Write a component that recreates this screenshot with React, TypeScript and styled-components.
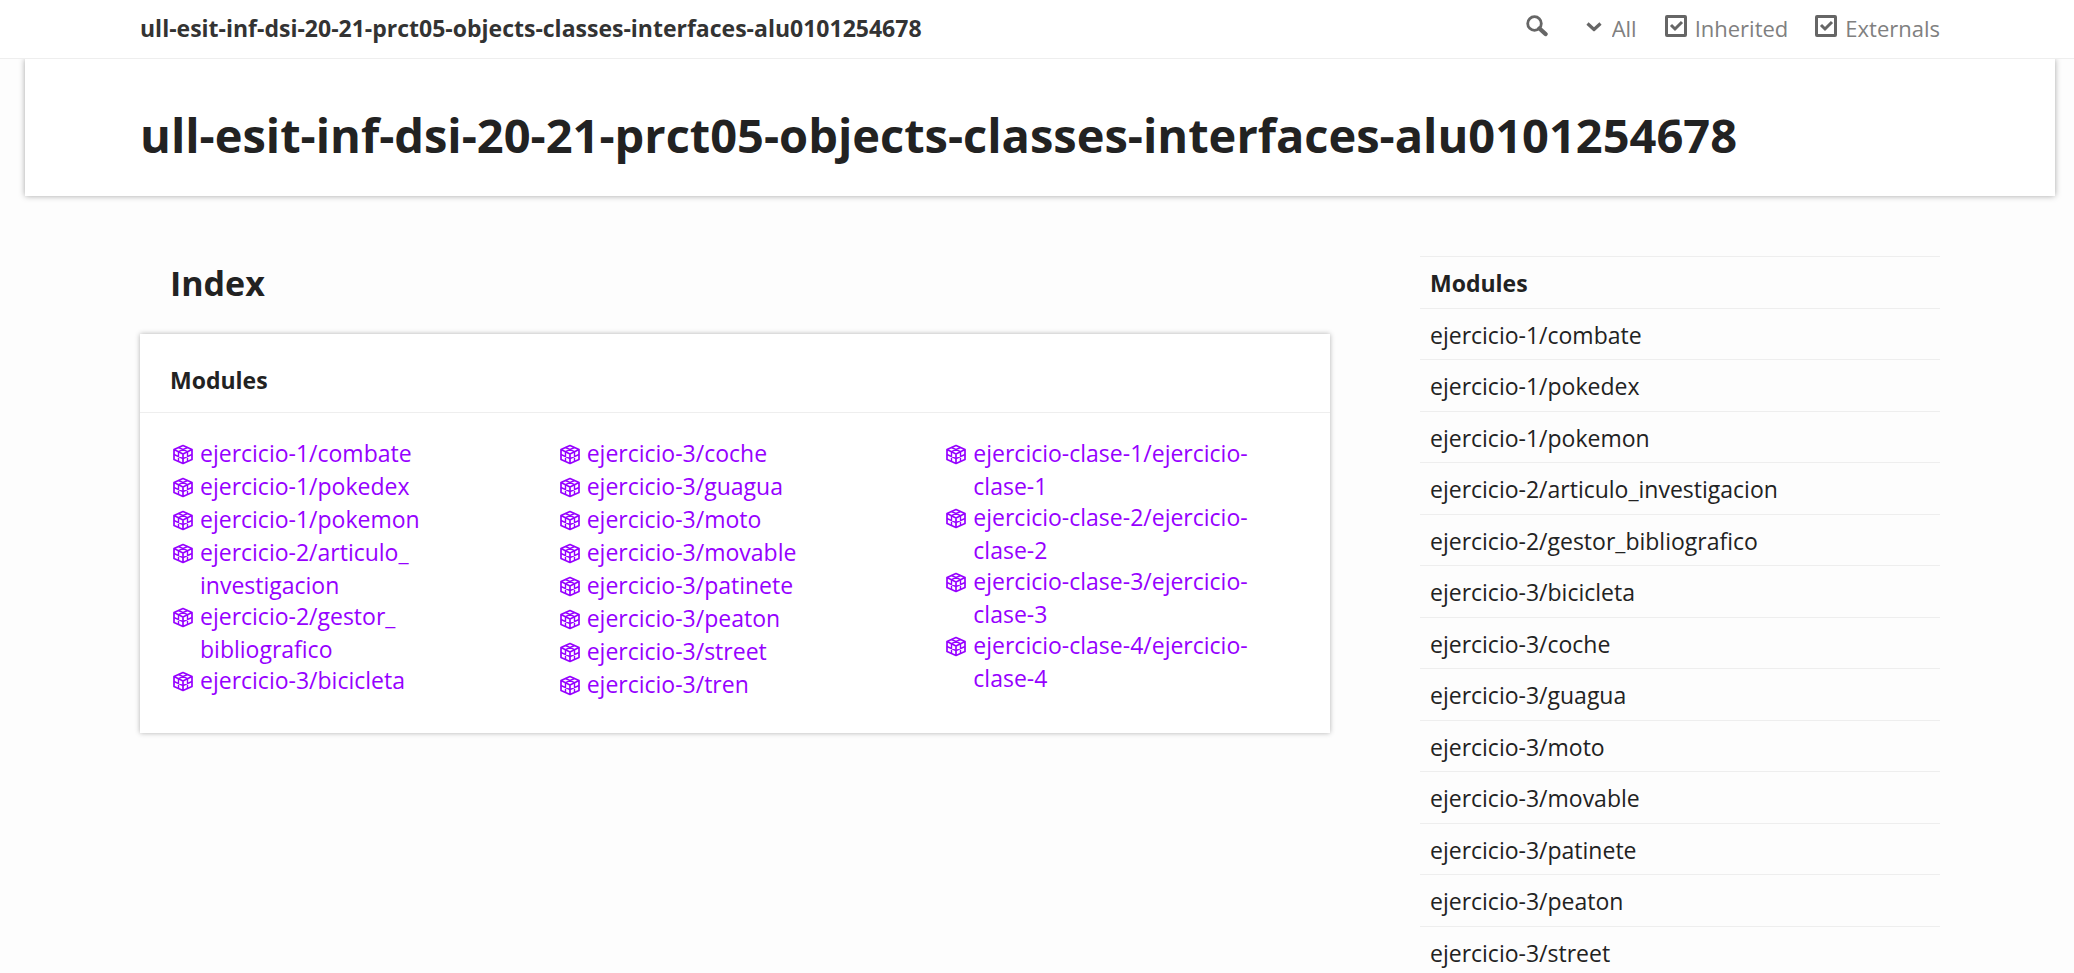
import React from "react";
import styled, { createGlobalStyle } from "styled-components";

const PROJECT = "ull-esit-inf-dsi-20-21-prct05-objects-classes-interfaces-alu0101254678";

const columns: string[][] = [
  [
    "ejercicio-1/combate",
    "ejercicio-1/pokedex",
    "ejercicio-1/pokemon",
    "ejercicio-2/articulo_investigacion",
    "ejercicio-2/gestor_bibliografico",
    "ejercicio-3/bicicleta",
  ],
  [
    "ejercicio-3/coche",
    "ejercicio-3/guagua",
    "ejercicio-3/moto",
    "ejercicio-3/movable",
    "ejercicio-3/patinete",
    "ejercicio-3/peaton",
    "ejercicio-3/street",
    "ejercicio-3/tren",
  ],
  [
    "ejercicio-clase-1/ejercicio-clase-1",
    "ejercicio-clase-2/ejercicio-clase-2",
    "ejercicio-clase-3/ejercicio-clase-3",
    "ejercicio-clase-4/ejercicio-clase-4",
  ],
];

const navigation = [...columns[0], ...columns[1].slice(0, 7)];

const GlobalStyle = createGlobalStyle`
  * { box-sizing: border-box; }
  body {
    margin: 0;
    background: #fdfdfd;
    color: #222;
    font-family: "Open Sans", "Noto Sans", sans-serif;
    font-size: 23px;
    line-height: 33px;
  }
  h1, h2, h3, ul { margin: 0; padding: 0; }
  ul { list-style: none; }
  a { color: inherit; text-decoration: none; }
`;

const Toolbar = styled.header`
  display: flex;
  align-items: center;
  justify-content: space-between;
  height: 59px;
  padding: 0 134px 2px 140px;
  background: #fff;
  border-bottom: 1px solid #eee;
  position: relative;
  z-index: 1;
`;

const ProjectLink = styled.a`
  color: #333;
  font-weight: 700;
`;

const Tools = styled.div`
  display: flex;
  align-items: center;
  color: #808080;
  font-size: 22px;
`;

const SearchButton = styled.button`
  display: flex;
  margin: 0 38px 5px 0;
  padding: 0;
  border: 0;
  background: none;
  color: #666;
`;

const Visibility = styled.label`
  display: flex;
  align-items: center;
  gap: 10px;
  margin-right: 27px;

  svg {
    margin-bottom: 3px;
    color: #666;
  }
`;

const VisibilitySelect = styled.select`
  appearance: none;
  padding: 0;
  border: 0;
  background: none;
  color: inherit;
  font: inherit;
`;

const Filter = styled.label`
  display: flex;
  align-items: center;
  gap: 8px;

  & + & { margin-left: 27px; }
`;

const TickBox = styled.span`
  display: grid;
  margin-bottom: 5px;
  color: #666;

  > * { grid-area: 1 / 1; }
  svg { pointer-events: none; }
`;

const Tick = styled.input`
  appearance: none;
  width: 22px;
  height: 22px;
  margin: 0;
  border: 3px solid #666;
  border-radius: 2px;
`;

const TitlePanel = styled.div`
  margin: 0 19px 0 25px;
  padding: 46px 115px 31px;
  background: #fff;
  box-shadow: 0 0 6px rgba(0, 0, 0, 0.35);
`;

const Title = styled.h1`
  font-size: 47px;
  line-height: 60px;
`;

const Body = styled.div`
  display: grid;
  grid-template-columns: minmax(0, 1190fr) minmax(0, 520fr);
  gap: 90px;
  align-items: start;
  padding: 60px 134px 0 140px;
`;

const IndexTitle = styled.h2`
  padding: 3px 30px 27px;
  font-size: 34px;
  line-height: 48px;
`;

const Panel = styled.section`
  background: #fff;
  box-shadow: 0 0 5px rgba(0, 0, 0, 0.3);
`;

const PanelTitle = styled.h3`
  padding: 30px 30px 15px;
  border-bottom: 1px solid #eee;
  font-size: 23px;
`;

const Columns = styled.div`
  display: grid;
  grid-template-columns: repeat(3, minmax(0, 1fr));
  gap: 30px;
  padding: 25px 30px 31px;
`;

const IndexItem = styled.li`
  padding-left: 30px;
  text-indent: -27px;
  line-height: 31px;
  color: #9600ff;
`;

const CubeSvg = styled.svg`
  width: 20px;
  height: 33px;
  margin-right: 7px;
  vertical-align: top;
`;

const Navigation = styled.nav`
  border-top: 1px solid #eee;
`;

const NavItem = styled.li<{ $current?: boolean }>`
  padding: 10px 10px 7px;
  border-bottom: 1px solid #eee;
  font-weight: ${(p) => (p.$current ? 700 : 400)};

  &:nth-child(odd) { padding-bottom: 8px; }
  &:last-child {
    padding-bottom: 2px;
    border-bottom: 0;
  }
`;

const Cube = () => (
  <CubeSvg viewBox="0 0 20 20" fill="none" stroke="currentColor" strokeLinejoin="round" aria-hidden="true">
    <path strokeWidth="1.7" d="M10 1 19 5v10l-9 4-9-4V5zM1 5l9 4.4L19 5M10 9.4V19" />
    <path strokeWidth="1.4" d="M5.5 3 14.5 7.2v9.6M14.5 3 5.5 7.2v9.6M1 10l9 4.2 9-4.2" />
  </CubeSvg>
);

/* Module names may break after an underscore. */
const ModuleName = ({ name }: { name: string }) => (
  <>
    {name.split("_").map((part, i) => (
      <React.Fragment key={i}>
        {i > 0 && <>_<wbr /></>}
        {part}
      </React.Fragment>
    ))}
  </>
);

const FilterBox = ({ label }: { label: string }) => (
  <Filter>
    <TickBox>
      <Tick type="checkbox" defaultChecked />
      <svg width="22" height="22" viewBox="0 0 22 22" fill="none" stroke="currentColor" strokeWidth="3" aria-hidden="true">
        <path d="M6 10l4 4 7-7" />
      </svg>
    </TickBox>
    {label}
  </Filter>
);

export default function App() {
  return (
    <>
      <GlobalStyle />
      <Toolbar>
        <ProjectLink href="#">{PROJECT}</ProjectLink>
        <Tools>
          <SearchButton type="button" aria-label="Search">
            <svg width="22" height="22" viewBox="0 0 22 22" fill="none" stroke="currentColor" aria-hidden="true">
              <circle cx="8.5" cy="8.5" r="6.8" strokeWidth="2.8" />
              <path d="M13.5 13.5 19.5 19" strokeWidth="4.4" strokeLinecap="round" />
            </svg>
          </SearchButton>
          <Visibility>
            <svg width="16" height="10" viewBox="0 0 16 10" fill="none" stroke="currentColor" strokeWidth="3.2" aria-hidden="true">
              <path d="M1.5 1.5l6.5 6 6.5-6" strokeLinejoin="round" />
            </svg>
            <VisibilitySelect aria-label="Visibility">
              <option>All</option>
            </VisibilitySelect>
          </Visibility>
          <FilterBox label="Inherited" />
          <FilterBox label="Externals" />
        </Tools>
      </Toolbar>
      <TitlePanel>
        <Title>{PROJECT}</Title>
      </TitlePanel>
      <Body>
        <main>
          <IndexTitle>Index</IndexTitle>
          <Panel>
            <PanelTitle>Modules</PanelTitle>
            <Columns>
              {columns.map((names) => (
                <ul key={names[0]}>
                  {names.map((name) => (
                    <IndexItem key={name}>
                      <a href="#">
                        <Cube />
                        <ModuleName name={name} />
                      </a>
                    </IndexItem>
                  ))}
                </ul>
              ))}
            </Columns>
          </Panel>
        </main>
        <Navigation>
          <ul>
            <NavItem $current>
              <a href="#">Modules</a>
            </NavItem>
            {navigation.map((name) => (
              <NavItem key={name}>
                <a href="#">{name}</a>
              </NavItem>
            ))}
          </ul>
        </Navigation>
      </Body>
    </>
  );
}
